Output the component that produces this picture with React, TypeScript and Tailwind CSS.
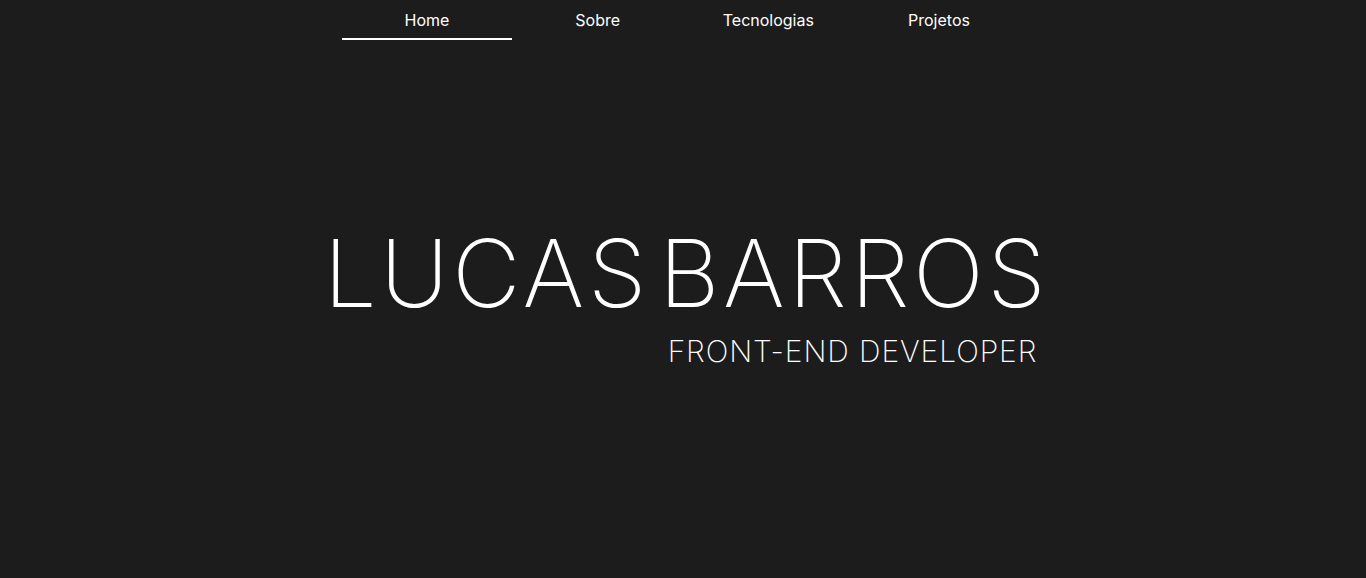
export default function App() {
  const links = ["Home", "Sobre", "Tecnologias", "Projetos"];
  return (
    <div className="min-h-screen bg-[#1c1c1c] text-white flex flex-col font-['Inter',sans-serif]">
      <nav className="flex justify-center">
        <ul className="flex">
          {links.map((l, i) => (
            <li key={l} className="w-[170.67px]">
              <a
                href="#"
                className={`block text-center text-[16px] leading-none pt-[12px] pb-[10px] border-b-2 ${
                  i === 0 ? "border-white" : "border-transparent"
                }`}
              >
                {l}
              </a>
            </li>
          ))}
        </ul>
      </nav>

      <main className="flex-1 flex flex-col items-center pt-[186px]">
        <div className="flex flex-col items-end ml-[7px]">
          <h1 className="flex gap-[9px] text-[94px] leading-none font-extralight tracking-[0.038em]">
            <span>LUCAS</span>
            <span>BARROS</span>
          </h1>
          <p className="text-[30px] leading-none font-extralight tracking-[0.03em] mt-[16px] mr-[12px]">
            FRONT-END DEVELOPER
          </p>
        </div>
      </main>
    </div>
  );
}
